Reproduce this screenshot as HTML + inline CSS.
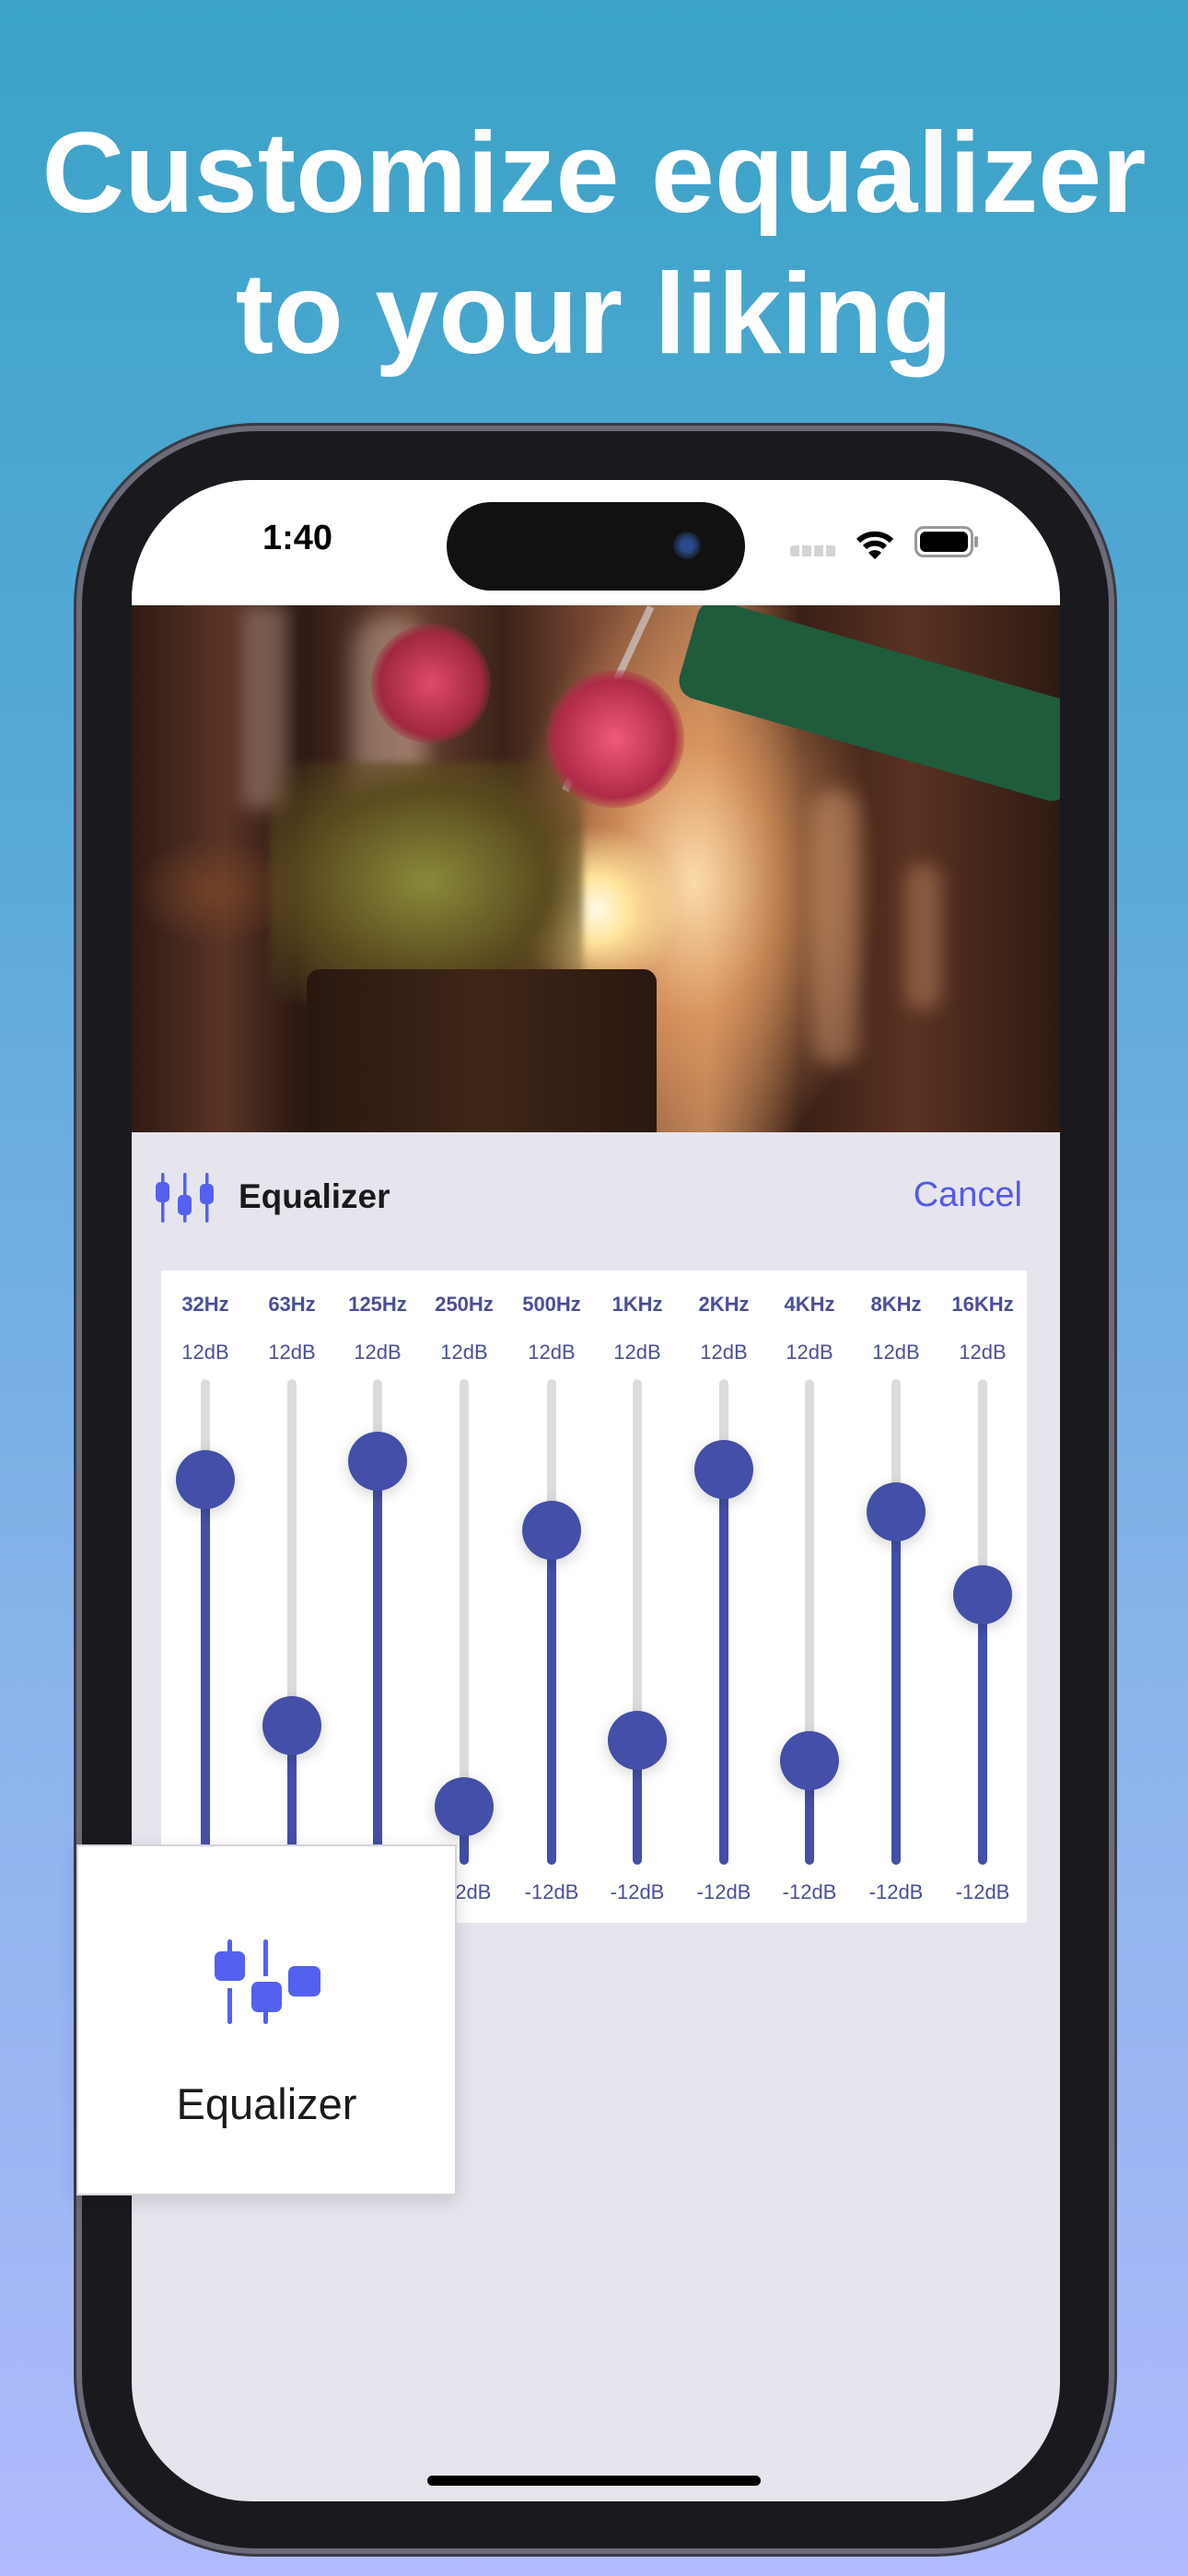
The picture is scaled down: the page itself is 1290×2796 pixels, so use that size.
<!DOCTYPE html>
<html><head><meta charset="utf-8">
<style>
*{margin:0;padding:0;box-sizing:border-box}
body{width:1290px;height:2796px;overflow:hidden;position:relative;font-family:"Liberation Sans",sans-serif;background:linear-gradient(180deg,#3aa3c7 0%,#56a9d6 30%,#89b4ea 65%,#b0bafc 100%)}
.abs{position:absolute}
.title{left:0;width:1290px;text-align:center;color:#fff;font-weight:bold;font-size:124px;letter-spacing:0;line-height:1}
.phone{left:89px;top:468px;width:1115px;height:2298px;border-radius:190px;background:#1a1a1e;box-shadow:0 0 0 6px #6c6b78,0 0 0 9px #3a3a44}
.screen{left:143px;top:521px;width:1008px;height:2194px;border-radius:130px;overflow:hidden;background:#e6e5ee}
.lbl{color:#4a4f98;font-size:22px;text-align:center;width:90px}
</style></head><body>
<div class="abs title" style="top:126px">Customize equalizer</div>
<div class="abs title" style="top:279px">to your liking</div>

<div class="abs" style="left:81px;top:910px;width:8px;height:88px;background:#555;border-radius:3px"></div>
<div class="abs" style="left:81px;top:1075px;width:8px;height:175px;background:#555;border-radius:3px"></div>
<div class="abs" style="left:81px;top:1295px;width:8px;height:175px;background:#555;border-radius:3px"></div>
<div class="abs" style="left:1204px;top:1195px;width:8px;height:270px;background:#555;border-radius:3px"></div>

<div class="abs phone"></div>
<div class="abs screen">
  <div class="abs" style="left:0;top:0;width:1008px;height:136px;background:#fff"></div>
  <div class="abs" style="left:142px;top:42px;font-size:38px;font-weight:bold;color:#000">1:40</div>
  <div class="abs" style="left:342px;top:24px;width:324px;height:96px;border-radius:48px;background:#111"></div>
  <div class="abs" style="left:588px;top:56px;width:30px;height:30px;border-radius:50%;background:radial-gradient(circle,#2a4c8a 30%,#1a1d2a 70%)"></div>
  <div class="abs" style="left:715px;top:71px;width:50px;height:12px;background:repeating-linear-gradient(90deg,#d4d4d4 0 10px,transparent 10px 13px);border-radius:3px"></div>
  <svg class="abs" style="left:785px;top:52px" width="44" height="36" viewBox="0 0 44 36"><path d="M4 14 A26 26 0 0 1 40 14" stroke="#000" stroke-width="6" fill="none"/><path d="M11 21 A16 16 0 0 1 33 21" stroke="#000" stroke-width="6" fill="none"/><path d="M22 34 L15 27 A10 10 0 0 1 29 27 Z" fill="#000"/></svg>
  <div class="abs" style="left:850px;top:50px;width:64px;height:34px;border-radius:10px;border:3px solid #999;padding:3px"><div style="width:100%;height:100%;background:#000;border-radius:6px"></div></div>
  <div class="abs" style="left:915px;top:61px;width:4px;height:12px;background:#999;border-radius:2px"></div>

  <!-- photo -->
  <div class="abs" style="left:0;top:136px;width:1008px;height:572px;overflow:hidden;background:
    radial-gradient(ellipse 90px 90px at 505px 330px,#fffbe6 0%,#ffe39a 40%,rgba(255,190,100,0) 100%),
    radial-gradient(ellipse 200px 330px at 610px 300px,rgba(255,225,175,.95) 0%,rgba(235,160,100,.7) 45%,rgba(120,60,40,0) 100%),
    linear-gradient(90deg,#2e1a14 0%,#5a3426 10%,#2a1812 18%,#6a4030 30%,#3a2218 40%,#7a4a34 50%,#b07a52 62%,#3a2016 72%,#5a3222 84%,#2e1a12 100%)">
    <div class="abs" style="left:120px;top:0;width:50px;height:220px;background:rgba(255,220,200,.3);filter:blur(10px)"></div>
    <div class="abs" style="left:240px;top:10px;width:80px;height:320px;background:rgba(255,230,210,.35);border-radius:40px;filter:blur(12px)"></div>
    <div class="abs" style="left:740px;top:200px;width:50px;height:300px;background:rgba(255,190,140,.35);border-radius:25px;filter:blur(10px)"></div>
    <div class="abs" style="left:840px;top:280px;width:40px;height:160px;background:rgba(255,190,140,.3);border-radius:20px;filter:blur(10px)"></div>
    <div class="abs" style="left:620px;top:-10px;width:440px;height:110px;background:#1f5c3c;transform:rotate(16deg);transform-origin:0 0;border-radius:20px"></div>
    <div class="abs" style="left:560px;top:0;width:8px;height:220px;background:rgba(230,240,255,.5);transform:rotate(25deg);transform-origin:0 0"></div>
    <div class="abs" style="left:150px;top:170px;width:340px;height:260px;background:radial-gradient(ellipse,#8a8a3a 0%,#5a4a1e 55%,rgba(60,40,20,0) 100%);filter:blur(4px)"></div>
    <div class="abs" style="left:0;top:250px;width:180px;height:120px;background:radial-gradient(ellipse,rgba(120,70,40,.8),rgba(60,30,20,0) 70%)"></div>
    <div class="abs" style="left:190px;top:395px;width:380px;height:190px;background:linear-gradient(90deg,#2a1810,#3e2618 50%,#2a1810);border-radius:14px 14px 0 0"></div>
    <div class="abs" style="left:260px;top:20px;width:130px;height:130px;border-radius:50%;background:radial-gradient(circle,#e04a6a,#a0283e 60%,rgba(160,40,60,0) 75%)"></div>
    <div class="abs" style="left:450px;top:70px;width:150px;height:150px;border-radius:50%;background:radial-gradient(circle,#f05a78,#b02a48 60%,rgba(160,40,60,0) 75%)"></div>
  </div>

  <!-- header -->
  <svg class="abs" style="left:26px;top:752px" width="66" height="54" viewBox="0 0 66 54"><g fill="#5460f0"><rect x="6" y="0" width="3.5" height="54" rx="1.7"/><rect x="0" y="10" width="15" height="22" rx="5"/><rect x="30" y="0" width="3.5" height="54" rx="1.7"/><rect x="24" y="24" width="15" height="22" rx="5"/><rect x="54" y="0" width="3.5" height="54" rx="1.7"/><rect x="48" y="12" width="15" height="22" rx="5"/></g></svg>
  <div class="abs" style="left:116px;top:757px;font-size:37px;font-weight:bold;color:#1a1a1a">Equalizer</div>
  <div class="abs" style="left:820px;top:755px;width:147px;text-align:right;font-size:38px;color:#5558ea">Cancel</div>

  <div class="abs" style="left:32px;top:858px;width:940px;height:708px;background:#fff"></div>
</div>

<div id="eq"></div>
<script>
var xs=[223,317,410,504,599,692,786,879,973,1067];
var hz=["32Hz","63Hz","125Hz","250Hz","500Hz","1KHz","2KHz","4KHz","8KHz","16KHz"];
var ky=[1606,1873,1586,1961,1661,1889,1595,1911,1641,1731];
var h="";
for(var i=0;i<10;i++){var x=xs[i];
h+='<div class="abs lbl" style="left:'+(x-45)+'px;top:1403px;font-weight:bold">'+hz[i]+'</div>';
h+='<div class="abs lbl" style="left:'+(x-45)+'px;top:1455px">12dB</div>';
h+='<div class="abs" style="left:'+(x-5)+'px;top:1497px;width:10px;height:'+(ky[i]-1497)+'px;background:#dcdcdc;border-radius:5px"></div>';
h+='<div class="abs" style="left:'+(x-5)+'px;top:'+ky[i]+'px;width:10px;height:'+(2024-ky[i])+'px;background:#434fa8;border-radius:5px"></div>';
h+='<div class="abs" style="left:'+(x-32)+'px;top:'+(ky[i]-32)+'px;width:64px;height:64px;border-radius:50%;background:#434fa8;box-shadow:0 4px 16px rgba(0,0,0,.18)"></div>';
h+='<div class="abs lbl" style="left:'+(x-45)+'px;top:2041px">-12dB</div>';}
document.getElementById('eq').innerHTML=h;
</script>

<div class="abs" style="left:83px;top:2002px;width:413px;height:381px;background:#fff;border:2px solid #d4d4d8;box-shadow:0 6px 20px rgba(0,0,0,.15)"></div>
<svg class="abs" style="left:233px;top:2105px" width="115" height="92" viewBox="0 0 115 92"><g fill="#5460f0"><rect x="14" y="0" width="5" height="92" rx="2.5"/><rect x="0" y="13" width="33" height="32" rx="7"/><rect x="53" y="0" width="5" height="92" rx="2.5"/><rect x="40" y="46" width="33" height="33" rx="7"/><rect x="80" y="29" width="35" height="33" rx="7"/></g><rect x="14" y="45" width="5" height="8" fill="#fff"/><rect x="53" y="40" width="5" height="6" fill="#fff"/></svg>
<div class="abs" style="left:83px;top:2256px;width:413px;text-align:center;font-size:47px;color:#1a1a1a">Equalizer</div>

<div class="abs" style="left:464px;top:2687px;width:362px;height:11px;border-radius:6px;background:#000"></div>
</body></html>
